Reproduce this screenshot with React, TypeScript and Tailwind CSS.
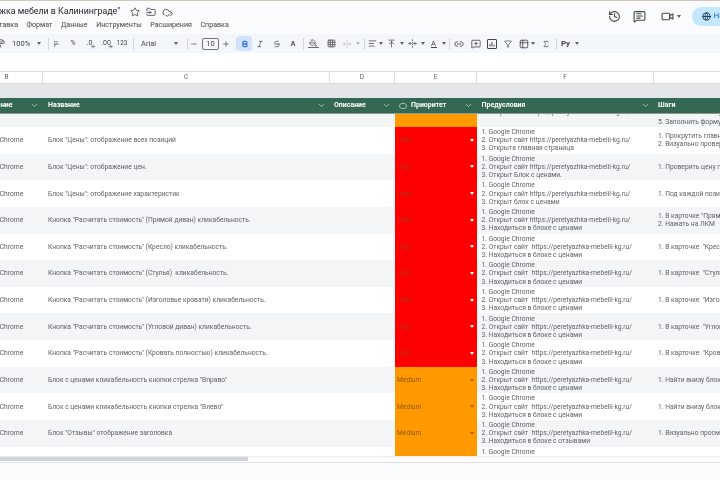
import { Star, FolderInput, CloudCheck, History, MessageSquareText, Video, Globe, Bold, Italic, Strikethrough, PaintBucket, Grid3x3, UnfoldHorizontal, AlignLeft, ArrowUpToLine, FoldHorizontal, Link2, MessageSquarePlus, Filter, Table2, Sigma, ChevronDown, Minus, Plus, PaintRoller, ArrowLeft, ArrowRight } from "lucide-react";
import type { ReactNode } from "react";

const widths = ["w-[76px]", "w-[287px]", "w-[65px]", "w-[82px]", "w-[177px]", "w-[120px]"];

type Row = { name: string; p: "High" | "Medium"; pre: string[]; steps: string[] };
const site = "2. Открыт сайт  https://peretyazhka-mebelii-kg.ru/";
const site1 = "2. Открыт сайт https://peretyazhka-mebelii-kg.ru/";
const inBlock = "3. Находиться в блоке с ценами";
const rows: Row[] = [
  { name: 'Блок "Цены": отображение всех позиций', p: "High", pre: ["1. Google Chrome", site1, "3. Открыта главная страница"], steps: ["1. Прокрутить главную", "2. Визуально проверить"] },
  { name: 'Блок "Цены": отображение цен.', p: "High", pre: ["1. Google Chrome", site1, "3. Открыт Блок с ценами."], steps: ["1. Проверить цену под"] },
  { name: 'Блок "Цены": отображение характеристик', p: "High", pre: ["1. Google Chrome", site1, "3. Открыт блок с ценами"], steps: ["1. Под каждой позицией"] },
  { name: 'Кнопка "Расчитать стоимость" (Прямой диван) кликабельность.', p: "High", pre: ["1. Google Chrome", site1, inBlock], steps: ['1. В карточке "Прямой', "2. Нажать на ЛКМ"] },
  { name: 'Кнопка "Расчитать стоимость" (Кресло) кликабельность.', p: "High", pre: ["1. Google Chrome", site, inBlock], steps: ['1. В карточке  "Кресло'] },
  { name: 'Кнопка "Расчитать стоимость" (Стулья)  кликабельность.', p: "High", pre: ["1. Google Chrome", site, inBlock], steps: ['1. В карточке  "Стулья'] },
  { name: 'Кнопка "Расчитать стоимость" (Изголовье кровати) кликабельность.', p: "High", pre: ["1. Google Chrome", site, inBlock], steps: ['1. В карточке  "Изголовье'] },
  { name: 'Кнопка "Расчитать стоимость" (Угловой диван) кликабельность.', p: "High", pre: ["1. Google Chrome", site, inBlock], steps: ['1. В карточке  "Угловой'] },
  { name: 'Кнопка "Расчитать стоимость" (Кровать полностью) кликабельность.', p: "High", pre: ["1. Google Chrome", site, inBlock], steps: ['1. В карточке  "Кровать'] },
  { name: 'Блок с ценами кликабельность кнопки стрелка "Вправо"', p: "Medium", pre: ["1. Google Chrome", site, inBlock], steps: ["1. Найти внизу блока"] },
  { name: 'Блок с ценами кликабельность кнопки стрелка "Влево"', p: "Medium", pre: ["1. Google Chrome", site, inBlock], steps: ["1. Найти внизу блока"] },
  { name: 'Блок "Отзывы" отображение заголовка', p: "Medium", pre: ["1. Google Chrome", site, "3. Находиться в блоке с отзывами"], steps: ["1. Визуально просмотреть"] },
];

function Caret() {
  return <span className="w-0 h-0 border-x-[2.5px] border-x-transparent border-t-[3px] border-t-[#5f6368] inline-block" />;
}

function Slot({ w, children }: { w: string; children?: ReactNode }) {
  return <span className={w + " shrink-0 flex items-center justify-center relative"}>{children}</span>;
}

const Sep = () => <span className="w-px h-[12px] bg-[#d5d7da] shrink-0" />;

function ChartIcon() {
  return (
    <svg width="10" height="10" viewBox="0 0 10 10" fill="none" stroke="currentColor" strokeWidth="1">
      <rect x="0.5" y="0.5" width="9" height="9" rx="0.5" />
      <path d="M3 7.5V5M5 7.5V3M7 7.5V6" />
    </svg>
  );
}

function HeadCell({ w, label, icon, pad }: { w: string; label: string; icon?: boolean; pad: string }) {
  return (
    <div className={w + " " + pad + " shrink-0 flex items-center pr-[4px] text-white font-bold text-[7px]"}>
      {icon && <span className="w-[8px] h-[6px] rounded-full border border-[#9fc1ae] mr-[4px]" />}
      <span className="flex-1 truncate">{label}</span>
      <ChevronDown size={9} className="text-[#c5dccd] shrink-0" />
    </div>
  );
}

function DataRow({ r, i }: { r: Row; i: number }) {
  const stripe = i % 2 === 0 ? "bg-white" : "bg-[#f3f5f7]";
  return (
    <div className={"flex h-[26.65px] shrink-0 text-[#5f6368] text-[6.7px] leading-[8.2px] whitespace-pre " + stripe}>
      <div className={widths[0] + " shrink-0 flex items-center pl-[10px]"}>Google Chrome</div>
      <div className={widths[1] + " shrink-0 flex items-center pl-[5px]"}>{r.name}</div>
      <div className={widths[2] + " shrink-0"} />
      <div className={widths[3] + " shrink-0 flex items-center justify-between pl-[2px] pr-[3px] " + (r.p === "High" ? "bg-[#ff0000] text-[#b0301a]" : "bg-[#ff9900] text-[#8f5a0a]")}>
        <span>{r.p}</span>
        <span className={"w-0 h-0 border-x-[2.5px] border-x-transparent border-t-[3px] " + (r.p === "High" ? "border-t-white" : "border-t-[#b45f06]")} />
      </div>
      <div className={widths[4] + " shrink-0 flex flex-col justify-center pl-[4.5px] overflow-hidden"}>
        {r.pre.map((t) => <span key={t}>{t}</span>)}
      </div>
      <div className={widths[5] + " shrink-0 flex flex-col justify-center pl-[4px] overflow-hidden"}>
        {r.steps.map((t) => <span key={t}>{t}</span>)}
      </div>
    </div>
  );
}

export default function App() {
  return (
    <div className="w-[720px] h-[480px] overflow-hidden flex flex-col bg-[#f9fbfd] font-['Roboto',sans-serif] blur-[0.45px]">
      <div className="h-px bg-[#d9c4bb] shrink-0" />
      {/* title bar */}
      <div className="h-[33px] shrink-0 flex items-start">
        <div className="flex-1 pt-[3px] min-w-0">
          <div className="flex items-center h-[16px]">
            <div className="w-[120px] flex justify-end overflow-hidden whitespace-nowrap text-[#1f1f1f] text-[8.8px]">Перетяжка мебели в Калининграде"</div>
            <Star size={10} className="text-[#444746] ml-[10px]" />
            <FolderInput size={10} className="text-[#444746] ml-[6px]" />
            <CloudCheck size={11} className="text-[#444746] ml-[6px]" />
          </div>
          <div className="flex items-center h-[11px] gap-[8.5px] text-[#444746] text-[7.1px] whitespace-nowrap">
            <div className="w-[18px] flex justify-end overflow-hidden">Файл Правка Вид Вставка</div>
            <span>Формат</span><span>Данные</span><span>Инструменты</span><span>Расширения</span><span>Справка</span>
          </div>
        </div>
        <div className="flex items-center h-[30px] -mr-[32px] text-[#444746]">
          <History size={13} />
          <MessageSquareText size={13} className="ml-[12px]" />
          <span className="flex items-center gap-[3px] ml-[15px]"><Video size={13} /><Caret /></span>
          <span className="flex items-center gap-[3px] w-[60px] h-[19px] ml-[11px] rounded-full bg-[#c2e7ff] pl-[10px] text-[#0b57d0] text-[7.5px]"><Globe size={9} className="text-[#001d35]" />Настройки</span>
        </div>
      </div>
      {/* toolbar */}
      <div className="h-[19px] shrink-0 bg-[#f3f6fb] flex items-center text-[7px] text-[#444746] overflow-hidden whitespace-nowrap">
        <span className="-ml-[6px] flex"><Slot w="w-[12px]"><PaintRoller size={9} /></Slot></span>
        <span className="ml-[6px] w-[18px] shrink-0 text-[7.5px]">100%</span>
        <Slot w="w-[18px]"><Caret /></Slot>
        <Sep />
        <Slot w="w-[16px]">р.</Slot>
        <Slot w="w-[16px]">%</Slot>
        <Slot w="w-[17px]"><span>.0</span><ArrowLeft size={5} className="absolute left-[10px] top-[6px]" strokeWidth={3} /></Slot>
        <Slot w="w-[16px]"><span>.00</span><ArrowRight size={5} className="absolute left-[10px] top-[6px]" strokeWidth={3} /></Slot>
        <Slot w="w-[16px]"><span className="text-[6.5px]">123</span></Slot>
        <span className="w-[3px] shrink-0" />
        <Sep />
        <span className="ml-[7px] w-[30px] shrink-0 text-[7.5px]">Arial</span>
        <Slot w="w-[10px]"><Caret /></Slot>
        <span className="w-[6px] shrink-0" />
        <Sep />
        <Slot w="w-[12px]"><Minus size={8} /></Slot>
        <span className="ml-[2px] w-[17px] h-[12px] shrink-0 border border-[#747775] rounded-[2px] flex items-center justify-center text-[7.5px]">10</span>
        <Slot w="w-[14px]"><Plus size={8} /></Slot>
        <span className="w-[3px] shrink-0" />
        <Sep />
        <span className="w-[15px] h-[15px] shrink-0 rounded-[3px] bg-[#d3e3fd] flex items-center justify-center"><Bold size={8} strokeWidth={3} className="text-[#0b57d0]" /></span>
        <Slot w="w-[16px]"><Italic size={8} /></Slot>
        <Slot w="w-[18px]"><Strikethrough size={8} /></Slot>
        <Slot w="w-[14px]"><span className="text-[7.5px] font-medium">A</span></Slot>
        <span className="w-[3px] shrink-0" />
        <Sep />
        <Slot w="w-[18px]"><span className="flex flex-col items-center"><PaintBucket size={8} /><span className="w-[11px] h-[1px] bg-[#6b6b6b]" /></span></Slot>
        <Slot w="w-[18px]"><Grid3x3 size={9} /></Slot>
        <Slot w="w-[14px]"><UnfoldHorizontal size={8} className="text-[#b4b7ba]" /></Slot>
        <Slot w="w-[8px]"><span className="w-0 h-0 border-x-[2px] border-x-transparent border-t-[3px] border-t-[#b4b7ba]" /></Slot>
        <span className="w-[2px] shrink-0" />
        <Sep />
        <Slot w="w-[14px]"><AlignLeft size={9} /></Slot>
        <Slot w="w-[4px]"><Caret /></Slot>
        <Slot w="w-[17px]"><ArrowUpToLine size={9} /></Slot>
        <Slot w="w-[4px]"><Caret /></Slot>
        <Slot w="w-[17px]"><FoldHorizontal size={9} /></Slot>
        <Slot w="w-[4px]"><Caret /></Slot>
        <Slot w="w-[17px]"><span className="flex flex-col items-center leading-[7px] text-[7.5px]">A<span className="w-[6px] h-px bg-[#444746]" /></span></Slot>
        <Slot w="w-[4px]"><Caret /></Slot>
        <span className="w-[3px] shrink-0" />
        <Sep />
        <Slot w="w-[18px]"><Link2 size={10} /></Slot>
        <Slot w="w-[16px]"><MessageSquarePlus size={10} /></Slot>
        <Slot w="w-[16px]"><ChartIcon /></Slot>
        <Slot w="w-[16px]"><Filter size={8} /></Slot>
        <Slot w="w-[15px]"><Table2 size={10} /></Slot>
        <Slot w="w-[4px]"><Caret /></Slot>
        <Slot w="w-[21px]"><Sigma size={8} /></Slot>
        <Sep />
        <Slot w="w-[17px]"><span className="font-bold text-[8px]">Ру</span></Slot>
        <span className="ml-[1px]"><Caret /></span>
      </div>
      {/* formula bar */}
      <div className="h-[18px] shrink-0 bg-white" />
      {/* column letters */}
      <div className="h-[11px] shrink-0 flex bg-white -ml-[33px] border-y border-[#dadce0] text-[6.5px] text-[#5f6368] box-content">
        {["B", "C", "D", "E", "F", ""].map((c, i) => (
          <div key={i} className={widths[i] + " shrink-0 border-r border-[#dadce0] flex items-center justify-center " + (i === 0 ? "pl-[4px]" : "")}>{c}</div>
        ))}
      </div>
      <div className="h-[14px] shrink-0 bg-[#e4e6e9]" />
      {/* table header */}
      <div className="h-[16px] shrink-0 flex bg-[#356854] -ml-[33px] border-b border-[#8d9a94]">
        <HeadCell w={widths[0]} pad="pl-[8px]" label="Окружение" />
        <HeadCell w={widths[1]} pad="pl-[5px]" label="Название" />
        <HeadCell w={widths[2]} pad="pl-[4px]" label="Описание" />
        <HeadCell w={widths[3]} pad="pl-[4px]" label="Приоритет" icon />
        <HeadCell w={widths[4]} pad="pl-[4.5px]" label="Предусловия" />
        <HeadCell w={widths[5]} pad="pl-[4px]" label="Шаги" />
      </div>
      {/* rows */}
      <div className="h-[342px] shrink-0 overflow-hidden flex flex-col bg-white -ml-[33px]">
        <div className="h-[13px] shrink-0 flex bg-[#f3f5f7] text-[#5f6368] text-[6.7px] leading-[8.2px] whitespace-pre">
          <div className={widths[0] + " shrink-0"} />
          <div className={widths[1] + " shrink-0"} />
          <div className={widths[2] + " shrink-0"} />
          <div className={widths[3] + " shrink-0 bg-[#ff9900]"} />
          <div className={widths[4] + " shrink-0 pl-[4.5px] pb-[11px] flex flex-col justify-end overflow-hidden"}>{site1}</div>
          <div className={widths[5] + " shrink-0 pl-[4px] pb-[1px] flex flex-col justify-end overflow-hidden"}>
            <span className="pb-[1.5px]">4. Нажать на кнопку</span>
            <span>5. Заполнить форму</span>
          </div>
        </div>
        {rows.map((r, i) => <DataRow key={r.name} r={r} i={i} />)}
        <div className="flex flex-1 text-[#5f6368] text-[6.7px] leading-[8.2px]">
          <div className={widths[0] + " shrink-0"} />
          <div className={widths[1] + " shrink-0"} />
          <div className={widths[2] + " shrink-0"} />
          <div className={widths[3] + " shrink-0 bg-[#ff9900]"} />
          <div className={widths[4] + " shrink-0 pl-[4.5px] pt-[1px]"}>1. Google Chrome</div>
        </div>
      </div>
      {/* scrollbar */}
      <div className="h-[6px] shrink-0 bg-white border-t border-[#e8eaed]">
        <div className="w-[248px] h-[4px] bg-[#d1d3d5]" />
      </div>
      <div className="flex-1 border-t border-[#dfe1e5] bg-[#f9fbfd]" />
    </div>
  );
}
